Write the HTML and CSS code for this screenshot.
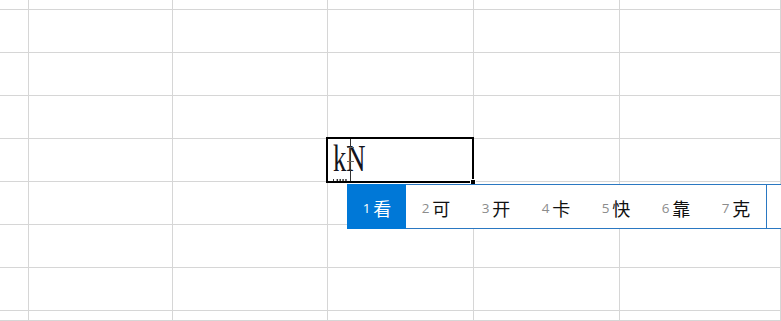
FILE: index.html
```html
<!DOCTYPE html>
<html lang="zh-CN">
<head>
<meta charset="utf-8">
<title>Sheet IME</title>
<link rel="stylesheet" href="styles.css">
</head>
<body>
<div class="sheet">
  <div class="c"></div><div class="c"></div><div class="c"></div><div class="c"></div><div class="c"></div><div class="c"></div>
  <div class="c"></div><div class="c"></div><div class="c"></div><div class="c"></div><div class="c"></div><div class="c"></div>
  <div class="c"></div><div class="c"></div><div class="c"></div><div class="c"></div><div class="c"></div><div class="c"></div>
  <div class="c"></div><div class="c"></div><div class="c"></div><div class="c"></div><div class="c"></div><div class="c"></div>
  <div class="c"></div><div class="c"></div><div class="c"></div><div class="c"></div><div class="c"></div><div class="c"></div>
  <div class="c"></div><div class="c"></div><div class="c"></div><div class="c"></div><div class="c"></div><div class="c"></div>
  <div class="c"></div><div class="c"></div><div class="c"></div><div class="c"></div><div class="c"></div><div class="c"></div>
  <div class="c"></div><div class="c"></div><div class="c"></div><div class="c"></div><div class="c"></div><div class="c"></div>
  <div class="c"></div><div class="c"></div><div class="c"></div><div class="c"></div><div class="c"></div><div class="c"></div>
</div>

<div class="editor">
  <div class="text"><span class="comp">k</span>N</div>
  <div class="caret"></div>
  <div class="beam"><span class="bar top"></span><span class="bar mid"></span></div>
  <div class="handle"></div>
</div>

<div class="ime">
  <div class="cand sel"><span class="n">1</span><span class="h">看</span></div>
  <div class="cand"><span class="n">2</span><span class="h">可</span></div>
  <div class="cand"><span class="n">3</span><span class="h">开</span></div>
  <div class="cand"><span class="n">4</span><span class="h">卡</span></div>
  <div class="cand"><span class="n">5</span><span class="h">快</span></div>
  <div class="cand"><span class="n">6</span><span class="h">靠</span></div>
  <div class="cand"><span class="n">7</span><span class="h">克</span></div>
  <div class="more"></div>
</div>
</body>
</html>
```

FILE: styles.css
```css
html, body {
  margin: 0;
  padding: 0;
  width: 781px;
  height: 321px;
  overflow: hidden;
  background: #ffffff;
}

.sheet {
  display: grid;
  grid-template-columns: 29px 144px 155px 146px 146px 161px;
  grid-template-rows: 10px repeat(7, 43px) 10px;
  width: 781px;
  height: 321px;
}

.c {
  box-sizing: border-box;
  border-right: 1px solid #d6d6d6;
  border-bottom: 1px solid #d6d6d6;
}

.editor {
  position: absolute;
  left: 326px;
  top: 137px;
  width: 148px;
  height: 46px;
  box-sizing: border-box;
  border: 2px solid #000000;
  background: #ffffff;
}

.text {
  position: absolute;
  left: 5px;
  top: 0;
  font-family: "Liberation Serif", "DejaVu Serif", serif;
  font-size: 37px;
  line-height: 40px;
  color: #14141e;
  transform: scaleX(0.72);
  transform-origin: left top;
  white-space: nowrap;
}

.comp {
  border-bottom: 2px dotted #333333;
}

.caret {
  position: absolute;
  left: 22px;
  top: 0;
  width: 1px;
  height: 42px;
  background: #333333;
}

.beam {
  position: absolute;
  left: 19px;
  top: 8px;
  width: 7px;
  height: 30px;
}

.bar {
  position: absolute;
  left: 0;
  width: 7px;
  height: 1px;
  background: #666666;
}

.bar.top {
  top: 0;
}

.bar.mid {
  top: 14px;
}

.handle {
  position: absolute;
  right: -4px;
  bottom: -4px;
  width: 6px;
  height: 6px;
  background: #000000;
  border: 1px solid #ffffff;
  box-sizing: border-box;
}

.ime {
  position: absolute;
  left: 347px;
  right: 0;
  top: 184px;
  height: 45px;
  display: flex;
  box-sizing: border-box;
  border: 1px solid #2a78c2;
  border-right: none;
  background: #ffffff;
}

.cand {
  width: 60px;
  display: flex;
  align-items: center;
  justify-content: center;
  gap: 3px;
  padding-top: 3px;
  box-sizing: border-box;
}

.cand:first-child {
  width: 59px;
  margin: -1px 0 -1px -1px;
  padding-left: 1px;
}

.sel {
  background: #0078d7;
}

.n {
  font-family: "Open Sans", "Noto Sans", sans-serif;
  font-size: 13.5px;
  color: #8c8c8c;
}

.h {
  font-family: "Noto Sans CJK SC", sans-serif;
  font-size: 18px;
  color: #111111;
}

.sel .n,
.sel .h {
  color: #ffffff;
}

.more {
  flex: 1;
  border-left: 1px solid #2a78c2;
}
```
